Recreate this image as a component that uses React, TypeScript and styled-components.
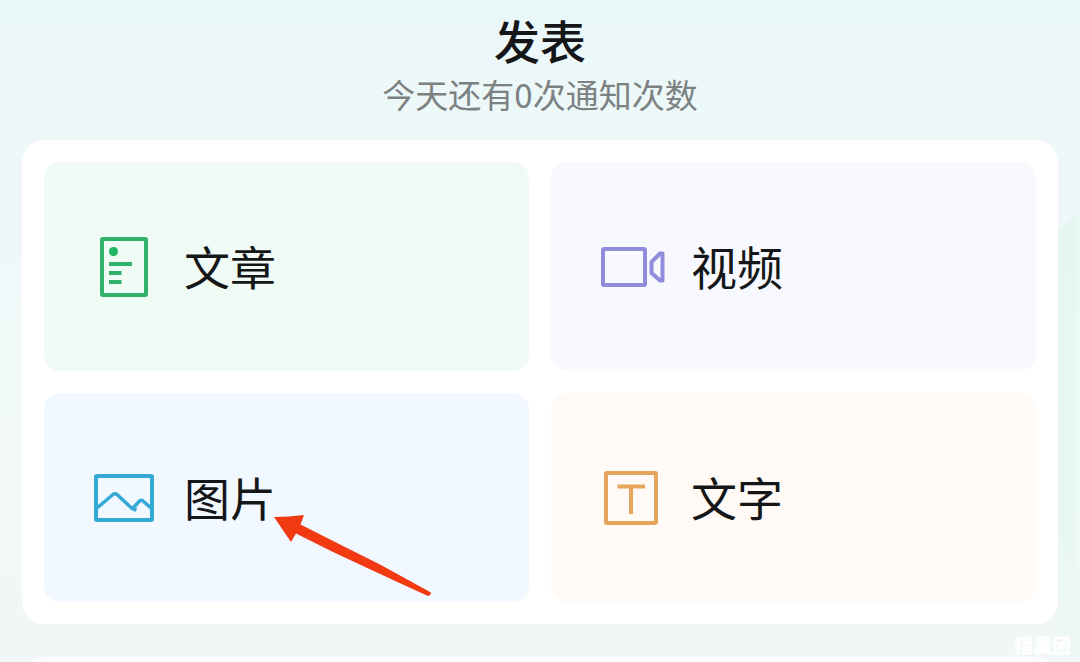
import React from "react";
import styled, { createGlobalStyle } from "styled-components";

const GlobalStyle = createGlobalStyle`
  * { box-sizing: border-box; }
  body {
    margin: 0;
    font-family: "Noto Sans CJK SC", sans-serif;
    color: #141617;
    background: #f1f7f7;
  }
`;

const Page = styled.main`
  position: relative;
  display: flex;
  flex-direction: column;
  height: 100vh;
  overflow: hidden;
  padding: 5px 22px 0;
  background: linear-gradient(180deg, #eaf7f8 0%, #eef8f9 24%, #f1f8f8 60%, #f1f7f7 100%);
`;

const Backdrop = styled.svg`
  position: absolute;
  top: 210px;
  right: 0;
  width: 22px;
  height: 452px;
`;

const Header = styled.header`
  text-align: center;
`;

const Title = styled.h1`
  margin: 0;
  font-size: 46px;
  line-height: 68px;
  font-weight: 500;
`;

const Subtitle = styled.p`
  margin: 0;
  font-size: 33px;
  line-height: 43px;
  color: #7c8182;
`;

const Panel = styled.section`
  position: relative;
  display: grid;
  grid-template-columns: 1fr 1fr;
  gap: 22px;
  margin-top: 24px;
  padding: 22px;
  border-radius: 22px;
  background: #fff;
`;

const Tile = styled.button<{ $bg: string }>`
  display: flex;
  align-items: center;
  gap: 24px;
  padding: 69px 44px 68px;
  border: 0;
  border-radius: 16px;
  background: ${(p) => p.$bg};
  color: inherit;
  font: inherit;
  cursor: pointer;
`;

const Label = styled.span`
  padding-bottom: 4px;
  font-size: 46px;
  line-height: 68px;
`;

const Icon = styled.svg`
  flex: none;
  width: 72px;
  height: 72px;
  fill: none;
  stroke-linejoin: round;
`;

const Arrow = styled.svg`
  position: absolute;
  left: 252px;
  top: 374px;
  width: 160px;
  height: 84px;
  pointer-events: none;
`;

const NextPanel = styled.section`
  flex: none;
  height: 60px;
  margin-top: 33px;
  border-radius: 22px;
  background: #fff;
`;

const Watermark = styled.span`
  position: absolute;
  right: 9px;
  bottom: 5px;
  font-size: 19px;
  line-height: 24px;
  font-weight: 900;
  color: #fff;
`;

const ArticleIcon = () => (
  <Icon viewBox="0 0 72 72" stroke="#2fb36c" strokeWidth="4" aria-hidden="true">
    <rect x="14" y="8" width="44" height="56" rx="1" />
    <circle cx="25.5" cy="20.5" r="4.5" fill="#1fb565" stroke="none" />
    <path d="M21 33H44M21 42H33.5M21 51H33.5" />
  </Icon>
);

const VideoIcon = () => (
  <Icon viewBox="0 0 72 72" stroke="#918ddd" strokeWidth="4" aria-hidden="true">
    <rect x="8" y="18" width="42" height="36" rx="1" />
    <path d="M67.5 22.5V49.5H65L56.500 42V31L65 22.5Z" />
  </Icon>
);

const ImageIcon = () => (
  <Icon viewBox="0 0 72 72" stroke="#35a9d6" strokeWidth="4" aria-hidden="true">
    <rect x="8" y="14" width="56" height="44" rx="1" />
    <path d="M9 46L25 32.500Q27 31 29 32.500L44 46.500L48.500 48M45 46L51.500 39Q53 37.500 55 39L63 46" strokeWidth="3.5" />
  </Icon>
);

const TextIcon = () => (
  <Icon viewBox="0 0 72 72" stroke="#e5a55c" strokeWidth="4" aria-hidden="true">
    <rect x="11" y="11" width="50" height="50" rx="1" />
    <path d="M22.5 24.5H50M36 24.5V52" />
  </Icon>
);

const tiles = [
  { label: "文章", bg: "#f0fbf6", icon: <ArticleIcon /> },
  { label: "视频", bg: "#f7f9fe", icon: <VideoIcon /> },
  { label: "图片", bg: "#f1f8ff", icon: <ImageIcon /> },
  { label: "文字", bg: "#fffaf5", icon: <TextIcon /> },
];

export default function App() {
  return (
    <>
      <GlobalStyle />
      <Page>
        <Backdrop viewBox="0 0 22 452" preserveAspectRatio="none" aria-hidden="true">
          <defs>
            <linearGradient id="edge" x1="0" y1="0" x2="0" y2="1">
              <stop offset="0" stopColor="#e5f6f2" />
              <stop offset="0.7" stopColor="#e8f7f4" />
              <stop offset="1" stopColor="#f0f8f6" />
            </linearGradient>
          </defs>
          <path d="M0 20L18 4V452H0Z" fill="url(#edge)" />
          <path d="M18 4L22 0V452H18Z" fill="#edf9f7" />
        </Backdrop>
        <Header>
          <Title>发表</Title>
          <Subtitle>今天还有0次通知次数</Subtitle>
        </Header>
        <Panel>
          {tiles.map((t) => (
            <Tile key={t.label} type="button" $bg={t.bg}>
              {t.icon}
              <Label>{t.label}</Label>
            </Tile>
          ))}
          <Arrow viewBox="0 0 160 84" aria-hidden="true">
            <path
              d="M0 3Q15 3 30 1L26.500 10.500L69 32L106 50.500L157 78.500Q157 81 154 82L119 66L59 38L22 19.500L17 28Z"
              fill="#f23a12"
            />
          </Arrow>
        </Panel>
        <NextPanel />
        <Watermark>猎赢团</Watermark>
      </Page>
    </>
  );
}
